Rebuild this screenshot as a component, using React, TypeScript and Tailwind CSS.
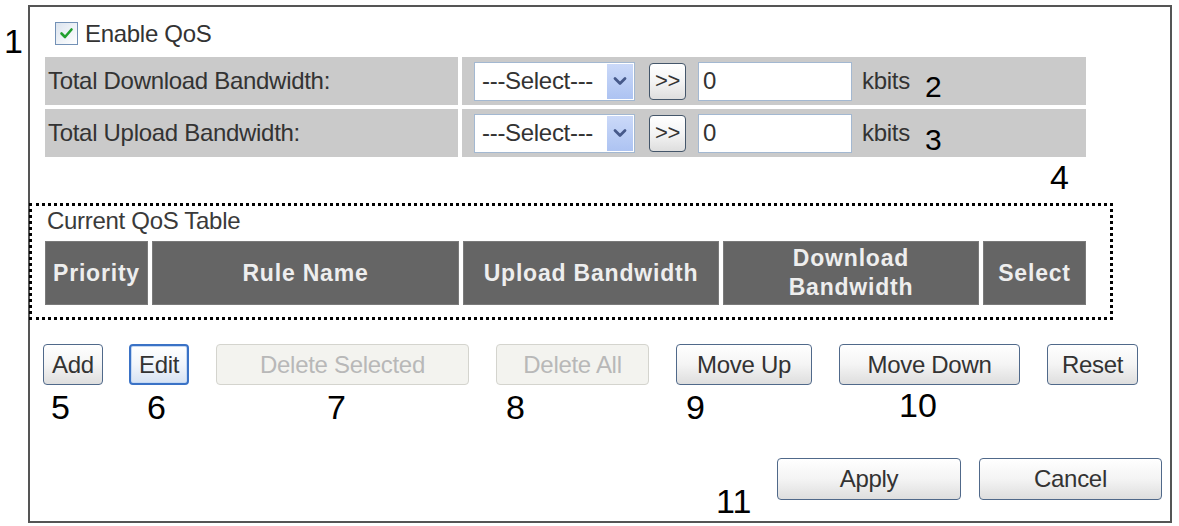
import type { ReactNode } from "react";

type BtnKind = "normal" | "focus" | "disabled";

const btnKinds: Record<BtnKind, string> = {
  normal:
    "border border-[#50698a] bg-linear-to-b from-[#ffffff] via-[#f4f4f4] to-[#dedede] text-[#333]",
  focus:
    "border-2 border-[#3a72c6] bg-linear-to-b from-[#ffffff] via-[#f1f5fb] to-[#d6e2f3] text-[#333] shadow-[inset_0_0_0_1px_#c4d8f3]",
  disabled: "border border-[#d4d4ce] bg-[#f3f3ef] text-[#b8b8b8]",
};

function Btn({
  children,
  className = "",
  kind = "normal",
}: {
  children: ReactNode;
  className?: string;
  kind?: BtnKind;
}) {
  return (
    <button
      type="button"
      disabled={kind === "disabled"}
      className={`flex items-center justify-center rounded-[4px] text-[24px] leading-none tracking-[-0.3px] ${btnKinds[kind]} ${className}`}
    >
      {children}
    </button>
  );
}

// callout numbers laid over the form
function Callout({ n, className }: { n: string; className: string }) {
  return (
    <span className={`pointer-events-none absolute leading-none text-black ${className}`}>
      {n}
    </span>
  );
}

function Checkbox() {
  return (
    <span className="flex h-[23px] w-[23px] items-center justify-center border border-[#7391b6] bg-linear-to-br from-[#dce4ee] to-[#ffffff]">
      <svg width="17" height="17" viewBox="0 0 17 17">
        <path
          d="M3.5 8.5 L7 12 L13.5 4.5"
          fill="none"
          stroke="#22a02e"
          strokeWidth="2.6"
          strokeLinecap="round"
          strokeLinejoin="round"
        />
      </svg>
    </span>
  );
}

function BandwidthRow({ label }: { label: string }) {
  return (
    <>
      <div className="flex h-[48px] items-center bg-[#cacaca] pl-[3px] text-[24px] tracking-[-0.3px] text-[#333]">
        {label}
      </div>
      <div className="flex h-[48px] items-center bg-[#cacaca] pl-[12px] text-[24px] tracking-[-0.3px] text-[#333]">
        <div className="flex h-[39px] w-[161px] items-center border border-[#a3b8d1] bg-white">
          <span className="flex-1 pl-[7px]">---Select---</span>
          <span className="mr-[1px] flex h-[35px] w-[26px] items-center justify-center bg-linear-to-b from-[#cbd9f8] to-[#adc3f2]">
            <svg width="14" height="10" viewBox="0 0 14 10">
              <path
                d="M2 2.5 L7 7.5 L12 2.5"
                fill="none"
                stroke="#46598a"
                strokeWidth="2.8"
                strokeLinecap="round"
                strokeLinejoin="round"
              />
            </svg>
          </span>
        </div>
        <Btn className="ml-[14px] h-[37px] w-[37px] !border-[#44566a] !text-[22px]">&gt;&gt;</Btn>
        <input
          readOnly
          defaultValue="0"
          className="ml-[12px] h-[39px] w-[154px] border border-[#a3b8d1] bg-white pl-[4px] outline-none"
        />
        <span className="ml-[10px]">kbits</span>
      </div>
    </>
  );
}

const headers = ["Priority", "Rule Name", "Upload Bandwidth", "Download\nBandwidth", "Select"];

export default function App() {
  return (
    <div className="relative h-[526px] w-[1179px] overflow-hidden bg-white pl-[28px] pt-[5px] text-[#333] [font-family:'Liberation_Sans',Arial,sans-serif]">
      <div className="flex h-[518px] w-[1144px] flex-col border-2 border-[#555]">
        <label className="ml-[25px] mt-[14px] flex h-[24px] items-center gap-[7px] text-[24px] tracking-[-0.3px] text-[#333]">
          <Checkbox />
          <span className="pt-[2px]">Enable QoS</span>
        </label>

        <div className="ml-[15px] mt-[12px] grid w-[1041px] grid-cols-[413px_624px] gap-[4px]">
          <BandwidthRow label="Total Download Bandwidth:" />
          <BandwidthRow label="Total Upload Bandwidth:" />
        </div>

        <div className="-ml-[1px] mt-[46px] w-[1084px] border-[3px] border-dotted border-black pb-[12px] pl-[13px] pt-[2px]">
          <div className="ml-[2px] text-[24px] leading-[26px] tracking-[-0.3px] text-[#3a3a3a]">
            Current QoS Table
          </div>
          <div className="mt-[7px] grid h-[64px] w-[1041px] grid-cols-[103px_307px_256px_256px_103px] gap-[4px]">
            {headers.map((h) => (
              <div
                key={h}
                className="flex items-center justify-center whitespace-pre-line border border-[#7a7a7a] bg-[#656565] text-center text-[23px] font-bold leading-[29px] tracking-[0.8px] text-[#eeeeee]"
              >
                {h}
              </div>
            ))}
          </div>
        </div>

        <div className="ml-[13px] mt-[24px] flex h-[41px] gap-[27px]">
          <Btn className="w-[60px]">Add</Btn>
          <Btn kind="focus" className="-ml-[1px] w-[60px]">
            Edit
          </Btn>
          <Btn kind="disabled" className="w-[253px]">
            Delete Selected
          </Btn>
          <Btn kind="disabled" className="w-[153px]">
            Delete All
          </Btn>
          <Btn className="w-[136px]">Move Up</Btn>
          <Btn className="w-[181px]">Move Down</Btn>
          <Btn className="w-[91px]">Reset</Btn>
        </div>

        <div className="mr-[8px] mt-[73px] flex h-[42px] gap-[18px] self-end">
          <Btn className="w-[184px]">Apply</Btn>
          <Btn className="w-[183px]">Cancel</Btn>
        </div>
      </div>

      <Callout n="1" className="left-[4px] top-[24px] text-[34px]" />
      <Callout n="2" className="left-[925px] top-[72px] text-[30px]" />
      <Callout n="3" className="left-[925px] top-[125px] text-[30px]" />
      <Callout n="4" className="left-[1050px] top-[160px] text-[34px]" />
      <Callout n="5" className="left-[51px] top-[390px] text-[34px]" />
      <Callout n="6" className="left-[147px] top-[390px] text-[34px]" />
      <Callout n="7" className="left-[327px] top-[390px] text-[34px]" />
      <Callout n="8" className="left-[506px] top-[390px] text-[34px]" />
      <Callout n="9" className="left-[686px] top-[390px] text-[34px]" />
      <Callout n="10" className="left-[899px] top-[388px] text-[34px]" />
      <Callout n="11" className="left-[716px] top-[484px] text-[34px]" />
    </div>
  );
}
